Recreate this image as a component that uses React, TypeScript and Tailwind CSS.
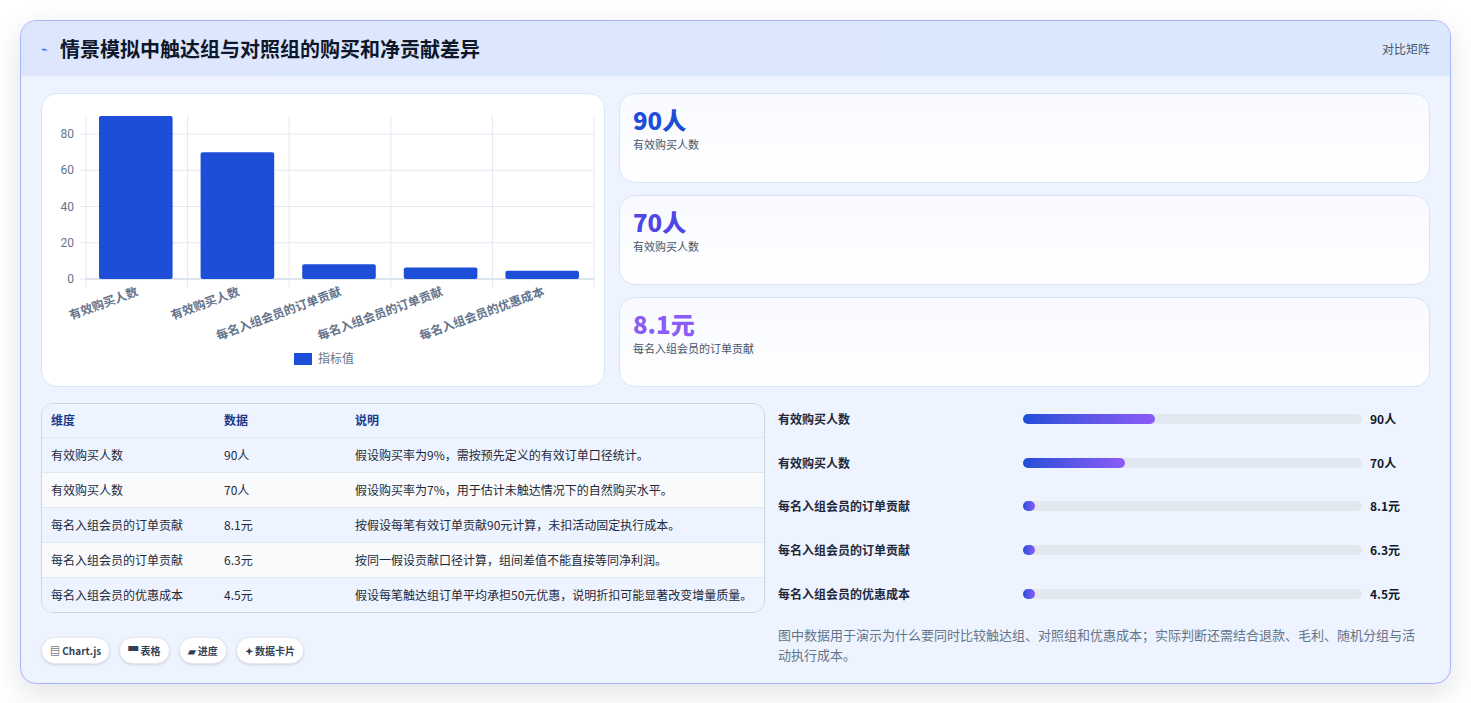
import React from "react";

const F = { fontFamily: '"Noto Sans CJK SC", "Noto Sans", sans-serif' };

const rows = [
  ["有效购买人数", "90人", "假设购买率为9%，需按预先定义的有效订单口径统计。"],
  ["有效购买人数", "70人", "假设购买率为7%，用于估计未触达情况下的自然购买水平。"],
  ["每名入组会员的订单贡献", "8.1元", "按假设每笔有效订单贡献90元计算，未扣活动固定执行成本。"],
  ["每名入组会员的订单贡献", "6.3元", "按同一假设贡献口径计算，组间差值不能直接等同净利润。"],
  ["每名入组会员的优惠成本", "4.5元", "假设每笔触达组订单平均承担50元优惠，说明折扣可能显著改变增量质量。"],
];
const bars = [
  ["有效购买人数", "90人", 39],
  ["有效购买人数", "70人", 30],
  ["每名入组会员的订单贡献", "8.1元", 3.5],
  ["每名入组会员的订单贡献", "6.3元", 3.5],
  ["每名入组会员的优惠成本", "4.5元", 3.5],
];

function Chart() {
  const x0 = 44, x1 = 552, y0 = 185, s = 1.8125;
  const vals = [90, 70, 8.1, 6.3, 4.5];
  const labels = ["有效购买人数", "有效购买人数", "每名入组会员的订单贡献", "每名入组会员的订单贡献", "每名入组会员的优惠成本"];
  const cw = (x1 - x0) / 5;
  return (
    <svg width="564" height="294" className="block">
      {[0, 20, 40, 60, 80].map((v) => (
        <g key={v}>
          <line x1={x0 - 6} x2={x1} y1={y0 - v * s} y2={y0 - v * s} stroke="#e2e8f0" />
          <text x={x0 - 12} y={y0 - v * s + 4} textAnchor="end" fontSize="12" fill="#64748b" fontFamily="Roboto, sans-serif">{v}</text>
        </g>
      ))}
      {[0, 1, 2, 3, 4, 5].map((i) => (
        <line key={i} x1={x0 + i * cw} x2={x0 + i * cw} y1={22} y2={y0 + 8} stroke="#e2e8f0" />
      ))}
      <line x1={x0} x2={x1} y1={y0} y2={y0} stroke="#cbd5e1" />
      {vals.map((v, i) => (
        <rect key={i} x={x0 + i * cw + 13} y={y0 - v * s} width={cw - 28} height={v * s} rx="2" fill="#1d4ed8" />
      ))}
      {labels.map((l, i) => {
        const ax = x0 + i * cw + cw / 2 + 2;
        const ay = y0 + 16;
        return (
          <text key={i} x={ax} y={ay} textAnchor="end" fontSize="12" fontWeight="bold" fill="#64748b" transform={`rotate(-20 ${ax} ${ay})`} style={F}>{l}</text>
        );
      })}
      <rect x="252" y="259" width="18" height="12" fill="#1d4ed8" />
      <text x="276" y="269" fontSize="12" fill="#64748b" style={F}>指标值</text>
    </svg>
  );
}

export default function App() {
  return (
    <div className="min-h-screen bg-white p-5" style={F}>
      <div className="rounded-2xl border border-[#a5b4fc] bg-[#eef4ff] shadow-[0_10px_30px_rgba(15,23,42,0.12)] overflow-hidden">
        <div className="flex h-[55px] items-center justify-between bg-gradient-to-r from-[#dde6fd] to-[#dbe8fd] px-5">
          <div className="flex items-center gap-3">
            <span className="text-[11px] text-[#2563eb]">⌁</span>
            <h1 className="text-[20px] font-bold text-[#0f172a]">情景模拟中触达组与对照组的购买和净贡献差异</h1>
          </div>
          <span className="text-[12px] text-[#475569]">对比矩阵</span>
        </div>
        <div className="px-5 pt-[17px] pb-[18px]">
          <div className="flex gap-[14px]">
            <div className="h-[294px] w-[564px] shrink-0 rounded-2xl border border-[#dbe4f5] bg-white">
              <Chart />
            </div>
            <div className="flex flex-1 flex-col gap-3">
              {[["90人", "text-[#1d4ed8]", "有效购买人数"], ["70人", "text-[#4f46e5]", "有效购买人数"], ["8.1元", "text-[#8b5cf6]", "每名入组会员的订单贡献"]].map(([v, c, l], i) => (
                <div key={i} className="h-[90px] rounded-2xl border border-[#dbe4f5] bg-gradient-to-b from-[#f8faff] to-white px-[13px] pt-[10px]">
                  <div className={`text-[24px] font-extrabold leading-[32px] ${c}`}>{v}</div>
                  <div className="text-[11px] text-[#475569]">{l}</div>
                </div>
              ))}
            </div>
          </div>
          <div className="mt-4 flex gap-[13px]">
            <div className="w-[724px] shrink-0">
              <div className="overflow-hidden rounded-xl border border-[#cbd5e1] bg-white">
                <table className="w-full text-left text-[12px]">
                  <thead>
                    <tr className="h-[33px] bg-[#eef4ff] text-[#1e3a8a]">
                      <th className="w-[182px] pl-[9px] font-bold">维度</th>
                      <th className="w-[131px] font-bold">数据</th>
                      <th className="font-bold">说明</th>
                    </tr>
                  </thead>
                  <tbody>
                    {rows.map((r, i) => (
                      <tr key={i} className={`h-[35px] border-t border-[#e2e8f0] text-[#1e293b] ${i % 2 === 0 ? "bg-[#eef4ff]" : "bg-[#f8fafc]"}`}>
                        <td className="pl-[9px]">{r[0]}</td>
                        <td>{r[1]}</td>
                        <td className="whitespace-nowrap">{r[2]}</td>
                      </tr>
                    ))}
                  </tbody>
                </table>
              </div>
              <div className="mt-6 flex gap-[9px]">
                {["▤ Chart.js", "▀ 表格", "▰ 进度", "✦ 数据卡片"].map((t) => (
                  <span key={t} className="rounded-full border border-[#e2e8f0] bg-white px-[8px] py-[5px] text-[10px] font-bold text-[#334155] shadow-sm">{t}</span>
                ))}
              </div>
            </div>
            <div className="flex-1">
              <div className="-mt-[6px] flex flex-col">
                {bars.map(([l, v, p], i) => (
                  <div key={i} className="flex h-[43.75px] items-center">
                    <span className="w-[245px] text-[12px] font-bold text-[#1e293b]">{l}</span>
                    <div className="h-[10px] w-[339px] rounded-full bg-[#e2e8f0]">
                      <div className="h-full rounded-full bg-gradient-to-r from-[#1d4ed8] to-[#8b5cf6]" style={{ width: `${p}%` }} />
                    </div>
                    <span className="ml-2 text-[12px] font-bold text-[#0f172a]">{v}</span>
                  </div>
                ))}
              </div>
              <p className="mt-[9px] pr-1 text-[13px] leading-[20px] text-[#64748b]">图中数据用于演示为什么要同时比较触达组、对照组和优惠成本；实际判断还需结合退款、毛利、随机分组与活动执行成本。</p>
            </div>
          </div>
        </div>
      </div>
    </div>
  );
}
